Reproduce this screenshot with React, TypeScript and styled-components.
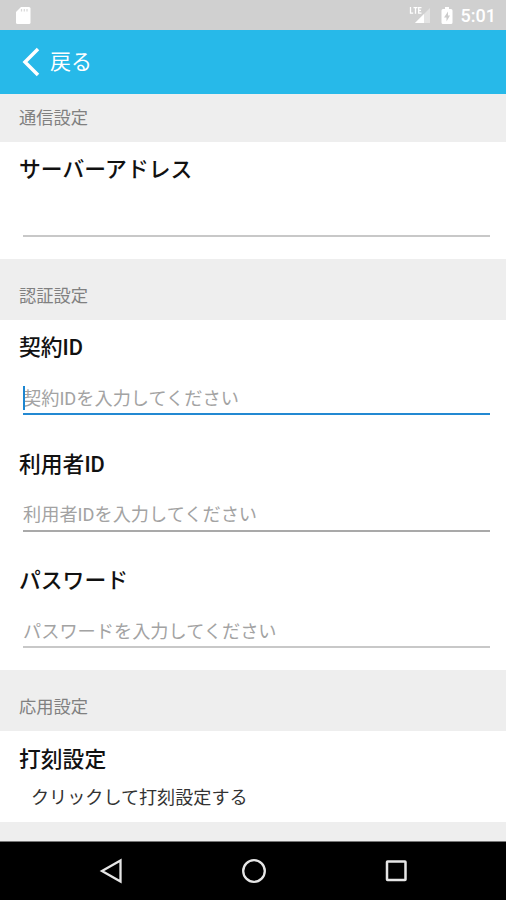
import React from "react";
import styled, { createGlobalStyle } from "styled-components";

const GlobalStyle = createGlobalStyle`
  * { box-sizing: border-box; }
  body {
    margin: 0;
    background: #000;
    font-family: Roboto, "Noto Sans CJK JP", sans-serif;
  }
`;

const Screen = styled.div`
  display: flex;
  flex-direction: column;
  width: 506px;
  height: 900px;
  overflow: hidden;
  background: #eee;
`;

const StatusBar = styled.header`
  display: flex;
  align-items: center;
  flex: none;
  height: 30px;
  padding: 0 10px 0 15px;
  background: #d0d0d0;
  color: #fff;
`;

const StatusIcons = styled.div`
  display: flex;
  align-items: center;
  margin-left: auto;
`;

const Clock = styled.span`
  margin-left: 8px;
  font-size: 18px;
  font-weight: 500;
  line-height: 30px;
  padding-top: 2px;
`;

const BatterySvg = styled.svg`
  margin-left: 10px;
`;

const AppBar = styled.nav`
  display: flex;
  align-items: center;
  flex: none;
  height: 64px;
  padding-left: 22px;
  background: #27b9e9;
`;

const BackButton = styled.button`
  display: flex;
  align-items: center;
  gap: 10px;
  padding: 0;
  border: 0;
  background: none;
  color: #fff;
  font-family: inherit;
  font-size: 21px;
  line-height: 30px;
`;

const SectionHeader = styled.h2<{ $height: number; $textHeight: number }>`
  display: flex;
  align-items: flex-end;
  flex: none;
  height: ${(p) => p.$height}px;
  margin: 0;
  padding-left: 19px;
  color: #808080;
  font-size: 17.25px;
  font-weight: 400;
  line-height: ${(p) => p.$textHeight}px;
`;

const Panel = styled.section<{ $height: number }>`
  display: flex;
  flex-direction: column;
  flex: none;
  height: ${(p) => p.$height}px;
  background: #fff;
`;

const Field = styled.label`
  display: flex;
  flex-direction: column;
  flex: none;
  height: 116.6px;
  padding: 11px 16px 0 19px;
`;

const Title = styled.span`
  color: #111;
  font-size: 21.8px;
  font-weight: 500;
  line-height: 33px;
`;

const InputRow = styled.span<{ $line: string }>`
  position: relative;
  display: flex;
  height: 32px;
  margin: 19px 0 0 4px;
  border-bottom: 2px solid ${(p) => p.$line};
`;

const TextInput = styled.input`
  width: 100%;
  height: 30px;
  padding: 0;
  border: 0;
  outline: 0;
  background: none;
  color: #222;
  font-family: inherit;
  font-size: 18.2px;

  &::placeholder {
    color: #a3a3a3;
    opacity: 1;
  }
`;

const Caret = styled.i`
  position: absolute;
  left: 0;
  top: 3px;
  width: 2px;
  height: 24px;
  background: #1c86d1;
`;

const PunchItem = styled.div`
  display: flex;
  flex-direction: column;
  padding: 12px 19px 0;
`;

const PunchHint = styled.span`
  padding: 8px 0 0 12px;
  color: #333;
  font-size: 18.1px;
  line-height: 28px;
`;

const NavBar = styled.footer`
  display: flex;
  align-items: center;
  justify-content: space-between;
  flex: none;
  height: 59px;
  margin-top: auto;
  padding: 0 98px 0 99px;
  border-top: 1px solid #777;
  background: #000;
`;

interface FieldProps {
  title: string;
  placeholder?: string;
  line: string;
  focused?: boolean;
}

function SettingField({ title, placeholder, line, focused }: FieldProps) {
  return (
    <Field>
      <Title>{title}</Title>
      <InputRow $line={line}>
        <TextInput placeholder={placeholder} />
        {focused && <Caret />}
      </InputRow>
    </Field>
  );
}

function SdCardIcon() {
  return (
    <svg width="16" height="19" viewBox="0 0 16 19">
      <path d="M6 1h8q1.500 0 1.500 1.500v14q0 1.500-1.500 1.500H2.500Q1 18 1 16.500V6z" fill="#fff" />
      <path d="M6.500 3v2.500M9.300 3v2.500M12 3v2.500" stroke="#d8d8d8" strokeWidth="1.200" />
    </svg>
  );
}

function SignalIcon() {
  return (
    <svg width="22" height="20" viewBox="0 0 22 20">
      <path d="M21 3v15H6z" fill="#e3e3e3" />
      <path d="M15 9v9H6z" fill="#fff" />
      <path
        d="M1.500 2v6.200h2.700M4.500 2.700h4M6.500 2.700v6M12.500 2.700H9.700v5.500h2.800M9.700 5.400h2.300"
        fill="none"
        stroke="#fff"
        strokeWidth="1.300"
      />
    </svg>
  );
}

function BatteryIcon() {
  return (
    <BatterySvg width="12" height="19" viewBox="0 0 12 19">
      <path d="M4 1h4v2h2q1.500 0 1.500 1.500v12Q11.500 18 10 18H2Q.5 18 .5 16.500v-12Q.5 3 2 3h2z" fill="#fff" />
      <path d="M7 5.500L3 11.500h2.500v4L9 9.500H7z" fill="#ccc" />
    </BatterySvg>
  );
}

export default function App() {
  return (
    <>
      <GlobalStyle />
      <Screen>
        <StatusBar>
          <SdCardIcon />
          <StatusIcons>
            <SignalIcon />
            <BatteryIcon />
            <Clock>5:01</Clock>
          </StatusIcons>
        </StatusBar>
        <AppBar>
          <BackButton>
            <svg width="18" height="30" viewBox="0 0 18 30">
              <path d="M16 2L3 15l13 13" fill="none" stroke="#fff" strokeWidth="3.500" />
            </svg>
            戻る
          </BackButton>
        </AppBar>

        <SectionHeader $height={47.5} $textHeight={47}>通信設定</SectionHeader>
        <Panel $height={117.5}>
          <SettingField title="サーバーアドレス" line="#c8c8c8" />
        </Panel>

        <SectionHeader $height={61} $textHeight={48}>認証設定</SectionHeader>
        <Panel $height={350}>
          <SettingField title="契約ID" placeholder="契約IDを入力してください" line="#2389d2" focused />
          <SettingField title="利用者ID" placeholder="利用者IDを入力してください" line="#a9a9a9" />
          <SettingField title="パスワード" placeholder="パスワードを入力してください" line="#c8c8c8" />
        </Panel>

        <SectionHeader $height={60.5} $textHeight={48}>応用設定</SectionHeader>
        <Panel $height={91}>
          <PunchItem>
            <Title>打刻設定</Title>
            <PunchHint>クリックして打刻設定する</PunchHint>
          </PunchItem>
        </Panel>

        <NavBar>
          <svg width="24" height="26" viewBox="0 0 24 26">
            <path d="M21.500 2.500v21L3 13z" fill="none" stroke="#e6e6e6" strokeWidth="2.300" />
          </svg>
          <svg width="26" height="26" viewBox="0 0 26 26">
            <circle cx="13" cy="13" r="10.800" fill="none" stroke="#e6e6e6" strokeWidth="2.300" />
          </svg>
          <svg width="24" height="26" viewBox="0 0 24 26">
            <rect x="3" y="3.500" width="18.500" height="18.500" rx=".5" fill="none" stroke="#e6e6e6" strokeWidth="2.500" />
          </svg>
        </NavBar>
      </Screen>
    </>
  );
}
